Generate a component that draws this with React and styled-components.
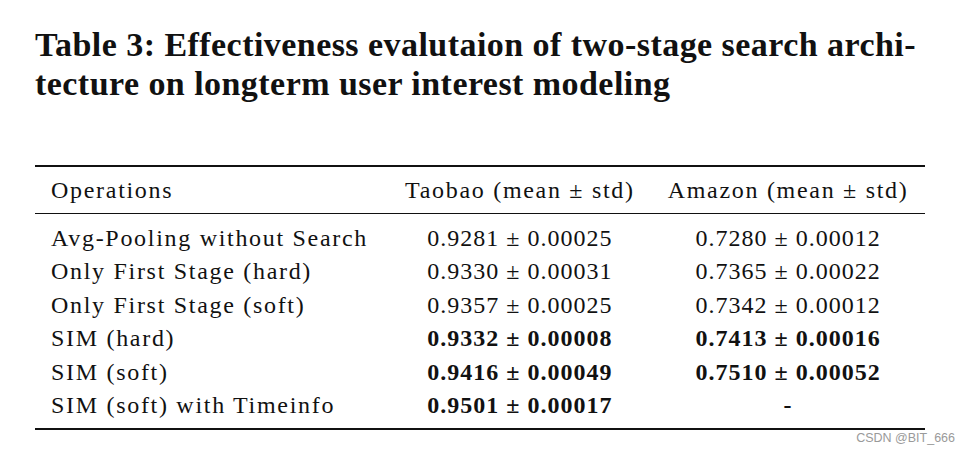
import React from "react";
import styled, { createGlobalStyle } from "styled-components";

const GlobalStyle = createGlobalStyle`
    html, body {
        margin: 0;
        padding: 0;
        background: #ffffff;
    }
`;

const Page = styled.div`
    width: 970px;
    height: 454px;
    box-sizing: border-box;
    padding: 25px 0 0 35px;
    font-family: "Liberation Serif", "DejaVu Serif", serif;
    color: #111;
    overflow: hidden;
`;

const Caption = styled.h1`
    margin: 0;
    width: 920px;
    font-size: 34px;
    line-height: 39px;
    font-weight: bold;
    letter-spacing: 0.45px;
`;

const Table = styled.table`
    margin-top: 62px;
    width: 890px;
    border-collapse: collapse;
    font-size: 24px;
    border-top: 2px solid #111;
    border-bottom: 2px solid #111;
`;

const HeadRow = styled.tr`
    border-bottom: 1.5px solid #111;
`;

const Th = styled.th`
    font-weight: normal;
    height: 46px;
    padding: 0 14px 0 ${(p) => (p.$left ? "16px" : "14px")};
    letter-spacing: 1.7px;
    text-align: ${(p) => (p.$left ? "left" : "center")};
    white-space: nowrap;
`;

const Td = styled.td`
    height: 33.4px;
    line-height: 33.4px;
    padding: ${(p) => (p.$first ? "8px" : "0")} 14px ${(p) => (p.$last ? "6px" : "0")}
        ${(p) => (p.$left ? "16px" : "14px")};
    text-align: ${(p) => (p.$left ? "left" : "center")};
    font-weight: ${(p) => (p.$bold ? "bold" : "normal")};
    letter-spacing: ${(p) => (p.$left ? "1.7px" : "1px")};
    white-space: nowrap;
`;

const Footer = styled.div`
    display: flex;
    justify-content: flex-end;
    padding-right: 15px;
    margin-top: 1px;
    font-family: "Liberation Sans", Arial, sans-serif;
    font-size: 12.5px;
    color: #9a9a9a;
`;

const rows = [
    { name: "Avg-Pooling without Search", taobao: "0.9281 ± 0.00025", amazon: "0.7280 ± 0.00012" },
    { name: "Only First Stage (hard)", taobao: "0.9330 ± 0.00031", amazon: "0.7365 ± 0.00022" },
    { name: "Only First Stage (soft)", taobao: "0.9357 ± 0.00025", amazon: "0.7342 ± 0.00012" },
    { name: "SIM (hard)", taobao: "0.9332 ± 0.00008", amazon: "0.7413 ± 0.00016", bold: true },
    { name: "SIM (soft)", taobao: "0.9416 ± 0.00049", amazon: "0.7510 ± 0.00052", bold: true },
    { name: "SIM (soft) with Timeinfo", taobao: "0.9501 ± 0.00017", amazon: "-", bold: true },
];

const App = () => {
    return (
        <>
            <GlobalStyle />
            <Page>
                <Caption>
                    Table 3: Effectiveness evalutaion of two-stage search archi-
                    <br />
                    tecture on longterm user interest modeling
                </Caption>
                <Table>
                    <thead>
                        <HeadRow>
                            <Th $left>Operations</Th>
                            <Th>Taobao (mean ± std)</Th>
                            <Th>Amazon (mean ± std)</Th>
                        </HeadRow>
                    </thead>
                    <tbody>
                        {rows.map((r, i) => {
                            const first = i === 0;
                            const last = i === rows.length - 1;
                            return (
                                <tr key={r.name}>
                                    <Td $left $first={first} $last={last}>
                                        {r.name}
                                    </Td>
                                    <Td $bold={r.bold} $first={first} $last={last}>
                                        {r.taobao}
                                    </Td>
                                    <Td $bold={r.bold} $first={first} $last={last}>
                                        {r.amazon}
                                    </Td>
                                </tr>
                            );
                        })}
                    </tbody>
                </Table>
                <Footer>CSDN @BIT_666</Footer>
            </Page>
        </>
    );
};

export default App;
